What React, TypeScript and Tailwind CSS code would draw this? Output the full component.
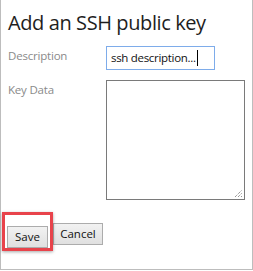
export default function App() {
  return (
    <div className="relative w-[253px] h-[270px] bg-white border-l border-r border-b border-[#bdbdbd] pl-[6px] pr-2" style={{ fontFamily: '"Open Sans", "Noto Sans", sans-serif' }}>
      <h1 className="pt-[10px] pl-px text-[20px] leading-[26px] text-[#1e1e1e] tracking-[-0.4px]">Add an SSH public key</h1>

      <div className="mt-[10px] grid grid-cols-[99px_1fr] gap-y-[10px]">
        <p className="pl-px pt-[1px] text-[11.5px] leading-[18px] text-[#8a8a8a] tracking-[-0.2px]">Description</p>
        <div className="w-[109px] h-[24px] border border-[#7eacea] flex items-center pl-[4px] text-[11.5px] text-[#111] tracking-[-0.3px]">
          <span>ssh description...</span>
          <span className="ml-px w-px h-[16px] bg-black" />
        </div>

        <p className="pl-px pt-[1px] text-[11.5px] leading-[18px] text-[#8a8a8a] tracking-[-0.2px]">Key Data</p>
        <div className="relative w-[139px] h-[120px] border border-[#7a7a7a]">
          <svg className="absolute right-[1px] bottom-[1px]" width="9" height="9" viewBox="0 0 9 9">
            <path d="M1 8 L8 1 M4 8 L8 4 M7 8 L8 7" stroke="#6e6e6e" strokeWidth="1" strokeDasharray="1 1" />
          </svg>
        </div>
      </div>

      <div className="mt-[23px] flex gap-[5px]">
        <div className="relative">
          <button className="w-[41px] h-[22px] border border-[#acacac] bg-gradient-to-b from-[#f2f2f2] to-[#e0e0e0] text-[11.5px] text-[#111]">Save</button>
          <div className="absolute -left-[5px] -top-[11px] w-[51px] h-[39px] border-[3px] border-[#e8434b] shadow-[0_1px_3px_rgba(0,0,0,0.35)]" />
        </div>
        <button className="w-[50px] h-[22px] border border-[#acacac] bg-gradient-to-b from-[#f2f2f2] to-[#e0e0e0] text-[11.5px] text-[#111]">Cancel</button>
      </div>
    </div>
  );
}
